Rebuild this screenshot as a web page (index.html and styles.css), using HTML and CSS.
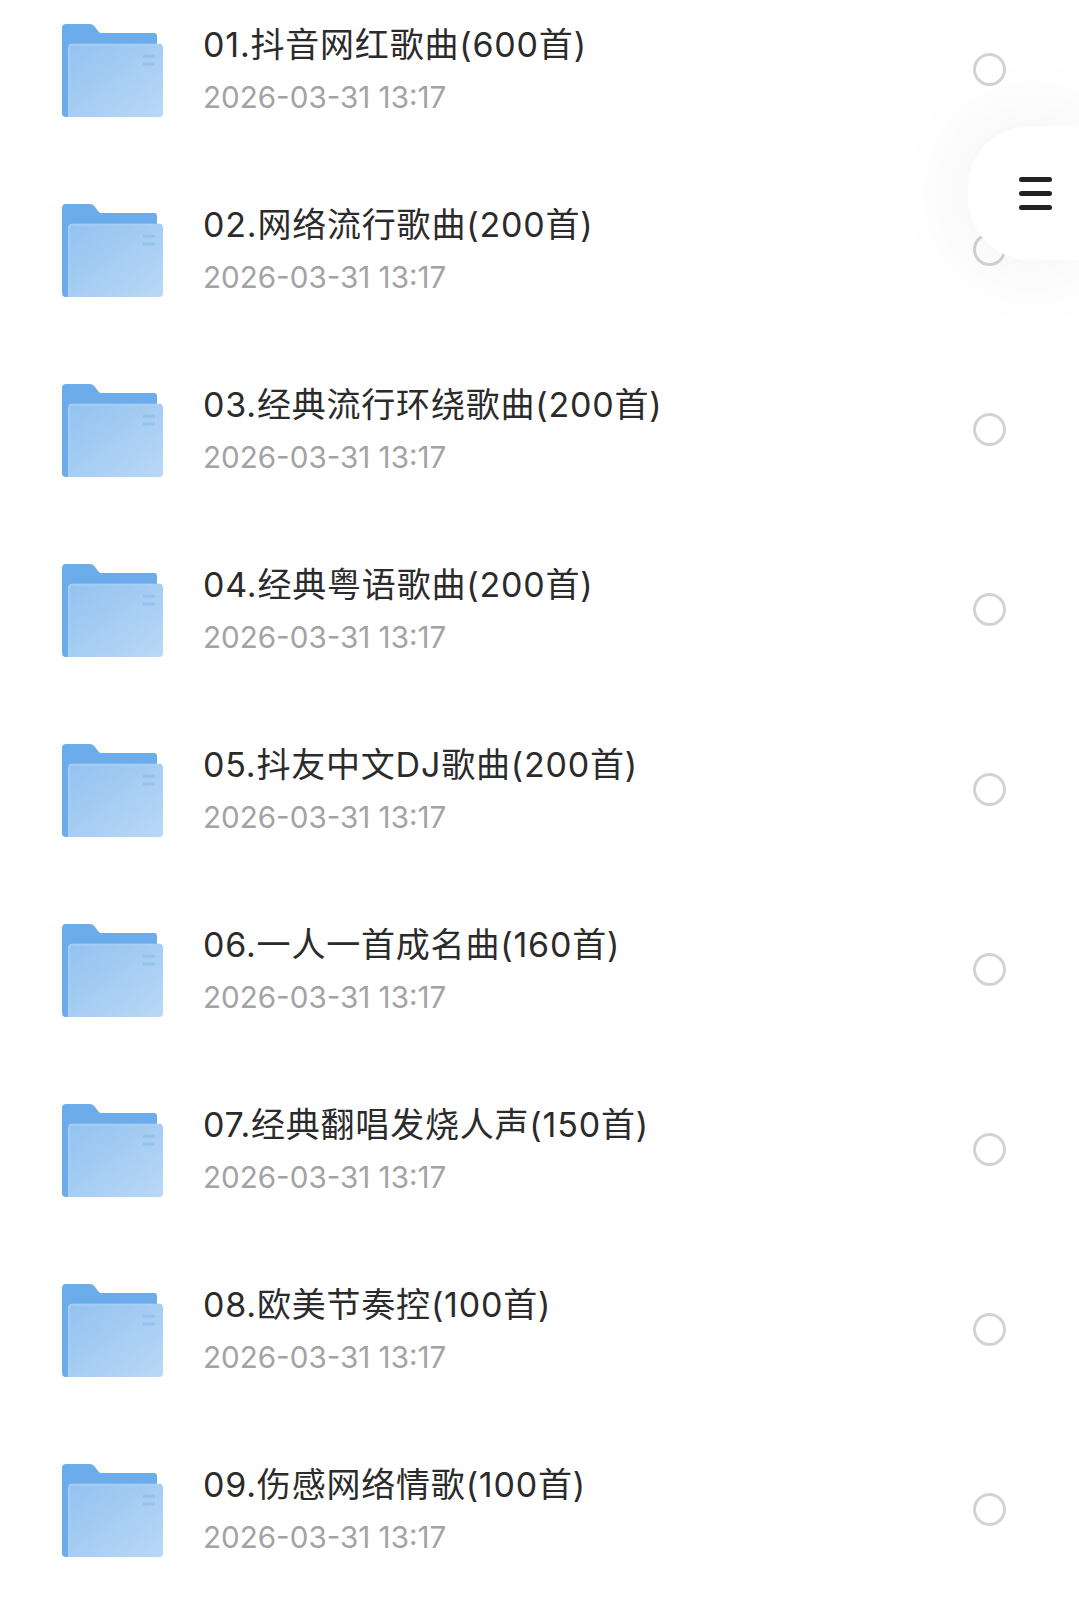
FILE: index.html
```html
<!DOCTYPE html>
<html lang="zh">
<head>
  <meta charset="utf-8">
  <title>文件列表</title>
  <link rel="stylesheet" href="styles.css">
</head>
<body>
  <svg class="defs" width="0" height="0">
    <defs>
      <linearGradient id="front" x1="0" y1="0" x2="1" y2="1">
        <stop offset="0" stop-color="#93c2f0"/>
        <stop offset="1" stop-color="#b9d8f6"/>
      </linearGradient>
      <symbol id="folder" viewBox="0 0 101 94" preserveAspectRatio="none">
        <path d="M0 4a4 4 0 0 1 4-4h24a6 6 0 0 1 5 3l3 4a4 4 0 0 0 4 2h52a3 3 0 0 1 3 3v12H0z" fill="#6cacea"/>
        <path d="M0 20h10v74H4a4 4 0 0 1-4-4z" fill="#6cacea"/>
        <path d="M6 24a4 4 0 0 1 4-4h87a4 4 0 0 1 4 4v66a4 4 0 0 1-4 4H6z" fill="url(#front)"/>
        <path d="M6 24a4 4 0 0 1 4-4h87v2H10a2 2 0 0 0-2 2v70H6z" fill="#aad0f5" opacity=".7"/>
        <path d="M81 31h12v3H81zM81 39h12v3H81z" fill="#8dbbe8" opacity=".6"/>
      </symbol>
    </defs>
  </svg>

  <div class="screen">
    <ul class="file-list">
      <li class="file-row">
        <svg class="folder"><use href="#folder"/></svg>
        <div class="file-info"><div class="file-name">01.抖音网红歌曲(600首)</div><div class="file-date">2026-03-31 13:17</div></div>
        <span class="radio"></span>
      </li>
      <li class="file-row">
        <svg class="folder"><use href="#folder"/></svg>
        <div class="file-info"><div class="file-name">02.网络流行歌曲(200首)</div><div class="file-date">2026-03-31 13:17</div></div>
        <span class="radio"></span>
      </li>
      <li class="file-row">
        <svg class="folder"><use href="#folder"/></svg>
        <div class="file-info"><div class="file-name">03.经典流行环绕歌曲(200首)</div><div class="file-date">2026-03-31 13:17</div></div>
        <span class="radio"></span>
      </li>
      <li class="file-row">
        <svg class="folder"><use href="#folder"/></svg>
        <div class="file-info"><div class="file-name">04.经典粤语歌曲(200首)</div><div class="file-date">2026-03-31 13:17</div></div>
        <span class="radio"></span>
      </li>
      <li class="file-row">
        <svg class="folder"><use href="#folder"/></svg>
        <div class="file-info"><div class="file-name">05.抖友中文DJ歌曲(200首)</div><div class="file-date">2026-03-31 13:17</div></div>
        <span class="radio"></span>
      </li>
      <li class="file-row">
        <svg class="folder"><use href="#folder"/></svg>
        <div class="file-info"><div class="file-name">06.一人一首成名曲(160首)</div><div class="file-date">2026-03-31 13:17</div></div>
        <span class="radio"></span>
      </li>
      <li class="file-row">
        <svg class="folder"><use href="#folder"/></svg>
        <div class="file-info"><div class="file-name">07.经典翻唱发烧人声(150首)</div><div class="file-date">2026-03-31 13:17</div></div>
        <span class="radio"></span>
      </li>
      <li class="file-row">
        <svg class="folder"><use href="#folder"/></svg>
        <div class="file-info"><div class="file-name">08.欧美节奏控(100首)</div><div class="file-date">2026-03-31 13:17</div></div>
        <span class="radio"></span>
      </li>
      <li class="file-row">
        <svg class="folder"><use href="#folder"/></svg>
        <div class="file-info"><div class="file-name">09.伤感网络情歌(100首)</div><div class="file-date">2026-03-31 13:17</div></div>
        <span class="radio"></span>
      </li>
    </ul>

    <div class="float-menu">
      <span class="bars"><i></i><i></i><i></i></span>
    </div>
  </div>
</body>
</html>
```

FILE: styles.css
```css
html, body { margin: 0; padding: 0; background: #fff; }
body { font-family: Inter, "Noto Sans CJK SC", sans-serif; }

.defs { position: absolute; }

.screen { position: relative; height: 1597px; overflow: hidden; }

.file-list { list-style: none; margin: -20px 0 0; padding: 0; }

.file-row { display: flex; align-items: center; height: 180px; padding: 0 73px 0 62px; box-sizing: border-box; }

.folder { width: 101px; height: 93px; flex: none; }

.file-info { flex: 1; margin-left: 40px; }
.file-name { font-size: 34px; line-height: 46px; color: #2b2b2b; letter-spacing: 0.8px; white-space: nowrap; }
.file-date { font-size: 29.6px; line-height: 42px; margin-top: 8px; color: #a3a3a3; white-space: nowrap; }

.radio { width: 33px; height: 33px; box-sizing: border-box; border: 3.5px solid #d2d4d4; border-radius: 50%; flex: none; margin-top: -2px; }

.float-menu {
  position: absolute; left: 968px; right: 0; top: 126px; height: 134px;
  background: #fff; border-radius: 62px 0 0 62px;
  box-shadow: 0 0 90px rgba(0, 0, 0, 0.07);
  display: flex; align-items: center; padding-left: 51px;
}
.bars { display: flex; flex-direction: column; gap: 9px; }
.bars i { display: block; width: 33px; height: 5px; border-radius: 2.5px; background: #222; }
```
